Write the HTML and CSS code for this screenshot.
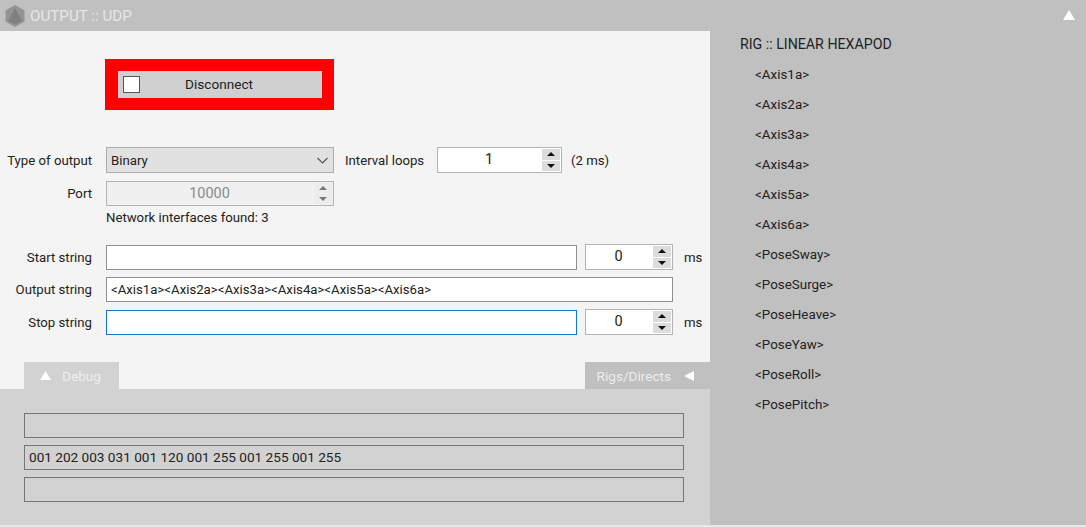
FILE: index.html
```html
<!DOCTYPE html>
<html lang="en">
<head>
<meta charset="utf-8">
<title>Output UDP</title>
<link rel="stylesheet" href="styles.css">
</head>
<body>
<div class="app">
  <header class="titlebar">
    <svg class="logo" width="22" height="24" viewBox="0 0 22 24"><path d="M11 1 20.500 6.500V17.500L11 23 1.500 17.500V6.500Z" fill="#949494"/><path d="M11 4 18 17 11 20.500 4 17Z" fill="#808080"/></svg>
    <span class="title">OUTPUT :: UDP</span>
    <svg class="collapse" width="12" height="10" viewBox="0 0 12 10"><path d="M6 0 12 10H0Z" fill="#fff"/></svg>
  </header>
  <div class="columns">
    <main class="left">
      <section class="form">
        <div class="red"><div class="toggle"><span class="check"></span><span class="toggle-label">Disconnect</span></div></div>
        <div class="row row-type">
          <label class="lbl">Type of output</label>
          <div class="select"><span>Binary</span><svg width="11" height="7" viewBox="0 0 11 7"><path d="M.5 1 5.500 6 10.500 1" fill="none" stroke="#555" stroke-width="1.100"/></svg></div>
          <label class="lbl-inline">Interval loops</label>
          <div class="spin spin-interval"><span class="val">1</span><span class="arrows"><i class="up"></i><i class="down"></i></span></div>
          <span class="note">(2 ms)</span>
        </div>
        <div class="row row-port">
          <label class="lbl">Port</label>
          <div class="spin spin-port"><span class="val">10000</span><span class="arrows"><i class="up"></i><i class="down"></i></span></div>
        </div>
        <div class="net">Network interfaces found: 3</div>
        <div class="row row-start">
          <label class="lbl">Start string</label>
          <div class="text text-short"></div>
          <div class="spin spin-ms"><span class="val">0</span><span class="arrows"><i class="up"></i><i class="down"></i></span></div>
          <span class="ms">ms</span>
        </div>
        <div class="row row-output">
          <label class="lbl">Output string</label>
          <div class="text text-long">&lt;Axis1a&gt;&lt;Axis2a&gt;&lt;Axis3a&gt;&lt;Axis4a&gt;&lt;Axis5a&gt;&lt;Axis6a&gt;</div>
        </div>
        <div class="row row-stop">
          <label class="lbl">Stop string</label>
          <div class="text text-short focus"></div>
          <div class="spin spin-ms"><span class="val">0</span><span class="arrows"><i class="up"></i><i class="down"></i></span></div>
          <span class="ms">ms</span>
        </div>
        <div class="tabs">
          <div class="tab-debug"><svg width="11" height="9" viewBox="0 0 11 9"><path d="M5.500 0 11 9H0Z" fill="#fff"/></svg><span>Debug</span></div>
          <div class="tab-rigs"><span>Rigs/Directs</span><svg width="10" height="10" viewBox="0 0 10 10"><path d="M0 5 10 0V10Z" fill="#fff"/></svg></div>
        </div>
      </section>
      <section class="debug">
        <div class="dbox"></div>
        <div class="dbox">001 202 003 031 001 120 001 255 001 255 001 255</div>
        <div class="dbox"></div>
      </section>
    </main>
    <aside class="right">
      <div class="rig">RIG :: LINEAR HEXAPOD</div>
      <ul class="items">
        <li>&lt;Axis1a&gt;</li>
        <li>&lt;Axis2a&gt;</li>
        <li>&lt;Axis3a&gt;</li>
        <li>&lt;Axis4a&gt;</li>
        <li>&lt;Axis5a&gt;</li>
        <li>&lt;Axis6a&gt;</li>
        <li>&lt;PoseSway&gt;</li>
        <li>&lt;PoseSurge&gt;</li>
        <li>&lt;PoseHeave&gt;</li>
        <li>&lt;PoseYaw&gt;</li>
        <li>&lt;PoseRoll&gt;</li>
        <li>&lt;PosePitch&gt;</li>
      </ul>
    </aside>
  </div>
  <footer class="strip"></footer>
</div>
</body>
</html>
```
FILE: styles.css
```css
* { box-sizing: border-box; }
html, body { margin: 0; height: 100%; overflow: hidden; }
body { font-family: Roboto, "Open Sans", sans-serif; font-size: 13.200px; color: #222; }
.app { width: 1086px; height: 527px; display: flex; flex-direction: column; background: #c0c0c0; }

.titlebar { height: 31px; flex: none; display: flex; align-items: center; padding: 0 11px 0 4px; background: #c0c0c0; }
.logo { flex: none; }
.title { margin-left: 4px; font-size: 15.200px; color: #e6e6e6; }
.collapse { margin-left: auto; margin-top: -1px; }

.columns { flex: 1; display: flex; min-height: 0; }
.left { width: 710px; flex: none; display: flex; flex-direction: column; }
.form { height: 358px; flex: none; background: #f4f4f4; padding-top: 28px; display: flex; flex-direction: column; }

.red { width: 229px; height: 51px; margin-left: 105px; padding: 12px 12px 12px 13px; background: #ff0000; }
.toggle { height: 27px; background: #d0d0d0; display: flex; align-items: center; padding-left: 5px; position: relative; }
.check { width: 17px; height: 17px; background: #fff; border: 1px solid #555; flex: none; }
.toggle-label { flex: 1; text-align: center; margin-right: 24px; font-size: 13.600px; padding-bottom: 2px; }

.row { display: flex; align-items: center; }
.lbl { width: 92px; flex: none; text-align: right; margin-right: 14px; white-space: nowrap; }
.row-type { margin-top: 37px; height: 26px; }
.row-port { margin-top: 7px; height: 26px; }
.net { margin: 3px 0 0 106px; height: 17px; line-height: 17px; }
.row-start { margin-top: 18px; height: 26px; }
.row-output { margin-top: 7px; height: 25px; }
.row-stop { margin-top: 7px; height: 26px; }

.select { width: 228px; height: 26px; background: #e1e1e1; border: 1px solid #adadad; display: flex; align-items: center; justify-content: space-between; padding: 0 5px 0 4px; }
.lbl-inline { margin: 0 13px 0 11px; width: 79px; flex: none; white-space: nowrap; }
.note { margin-left: 9px; }
.ms { margin-left: 11px; }

.spin { height: 26px; background: #fff; border: 1px solid #b4b4b4; display: flex; align-items: stretch; flex: none; }
.val { flex: 1; text-align: center; font-size: 14.500px; line-height: 23px; padding-right: 2px; }
.arrows { width: 19px; flex: none; display: flex; flex-direction: column; gap: 1px; padding: 1px 1px 1px 0; background: #fff; }
.arrows i { flex: 1; background: #dcdcdc; display: flex; align-items: center; justify-content: center; }
.arrows i::after { content: ""; width: 0; height: 0; border-left: 4px solid transparent; border-right: 4px solid transparent; }
.up::after { border-bottom: 4px solid #111; }
.down::after { border-top: 4px solid #111; }
.spin-interval { width: 125px; }
.spin-port { width: 228px; height: 25px; background: #f0f0f0; color: #8a8a8a; }
.spin-port .arrows { background: #f0f0f0; }
.spin-port .arrows i { background: #ececec; }
.spin-port .up::after { border-bottom-color: #777; }
.spin-port .down::after { border-top-color: #777; }
.spin-ms { width: 88px; margin-left: 8px; }

.text { height: 25px; background: #fff; border: 1px solid #8f8f8f; padding: 0 4px; line-height: 23px; flex: none; }
.text-short { width: 471px; }
.text-long { width: 567px; }
.focus { border-color: #0a7ad6; }

.tabs { margin-top: auto; height: 27px; display: flex; justify-content: space-between; padding-left: 24px; }
.tab-debug { width: 95px; background: #d2d2d2; color: #ededed; display: flex; align-items: center; gap: 11px; padding-left: 16px; font-size: 13.600px; }
.tab-rigs { width: 125px; background: #c0c0c0; color: #ededed; display: flex; align-items: center; justify-content: flex-end; gap: 13px; padding-right: 16px; font-size: 13.600px; }

.debug { height: 136px; flex: none; background: #d2d2d2; padding: 24px 26px 0 24px; display: flex; flex-direction: column; gap: 7px; }
.dbox { height: 25px; border: 1px solid #777; padding: 0 4px; line-height: 23px; font-size: 13.600px; }

.right { flex: 1; padding: 3px 0 0 30px; }
.rig { height: 20px; line-height: 20px; font-size: 14.200px; }
.items { list-style: none; margin: 0; padding: 0 0 0 15px; }
.items li { height: 30px; line-height: 20px; padding-top: 11px; font-size: 13.400px; }

.strip { height: 2px; flex: none; background: #e8e8e8; }
```
